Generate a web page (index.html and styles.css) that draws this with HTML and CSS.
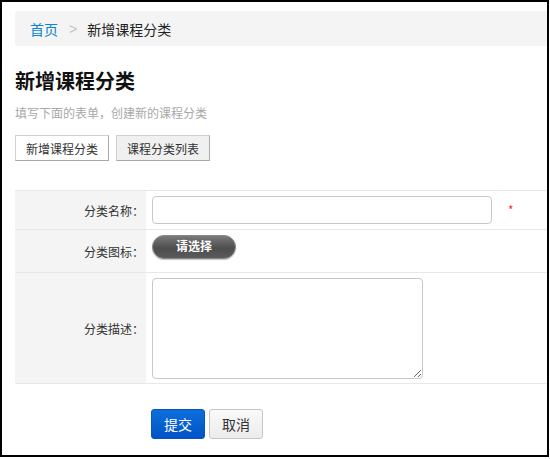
FILE: index.html
```html
<!DOCTYPE html>
<html lang="zh-CN">
<head>
<meta charset="utf-8">
<title>新增课程分类</title>
<link rel="stylesheet" href="styles.css">
</head>
<body>
<div class="frame">
  <div class="crumbs">
    <a class="crumb-link" href="#">首页</a>
    <span class="crumb-sep">&gt;</span>
    <span class="crumb-current">新增课程分类</span>
  </div>

  <h1 class="page-title">新增课程分类</h1>
  <p class="page-desc">填写下面的表单，创建新的课程分类</p>

  <div class="tabs">
    <button class="tab tab-active" type="button">新增课程分类</button>
    <button class="tab" type="button">课程分类列表</button>
  </div>

  <form class="cat-form">
    <table class="form-table">
      <tr class="row-name">
        <th>分类名称：</th>
        <td><input class="text-input" type="text"><span class="required">*</span></td>
      </tr>
      <tr class="row-icon">
        <th>分类图标：</th>
        <td><button class="pick-btn" type="button">请选择</button></td>
      </tr>
      <tr class="row-desc">
        <th>分类描述：</th>
        <td><textarea class="text-area"></textarea></td>
      </tr>
    </table>
    <div class="actions">
      <button class="btn btn-primary" type="submit">提交</button>
      <button class="btn btn-default" type="button">取消</button>
    </div>
  </form>
</div>
</body>
</html>
```

FILE: styles.css
```css
* {
  box-sizing: border-box;
}

html, body {
  margin: 0;
  padding: 0;
  background: #fff;
}

body {
  font-family: "Noto Sans CJK SC", "Liberation Sans", sans-serif;
  font-size: 12px;
  color: #333;
}

.frame {
  width: 549px;
  height: 457px;
  border: 2px solid #000;
  padding: 9px 0 0 13px;
}

/* breadcrumb bar */
.crumbs {
  height: 35px;
  background: #f4f4f4;
  border-radius: 3px 0 0 3px;
  display: flex;
  align-items: center;
  padding-left: 15px;
  font-size: 14px;
}

.crumb-link {
  color: #0a84d6;
  text-decoration: none;
}

.crumb-sep {
  color: #c4c4c4;
  margin: 0 10px 0 11px;
  font-family: "Liberation Sans", sans-serif;
}

.crumb-current {
  color: #222;
}

.page-title {
  margin: 23px 0 0;
  font-size: 20px;
  line-height: 24px;
  font-weight: bold;
  color: #111;
}

.page-desc {
  margin: 12px 0 0;
  font-size: 12px;
  line-height: 16px;
  color: #a8a8a8;
}

/* tab buttons */
.tabs {
  display: flex;
  gap: 7px;
  margin-top: 14px;
}

.tab {
  height: 26px;
  padding: 0 10px;
  font-family: inherit;
  font-size: 12px;
  color: #333;
  background: #f0f0f0;
  border: 1px solid #d0d0d0;
  border-right-color: #aaa;
  border-bottom-color: #aaa;
  border-radius: 0;
}

.tab-active {
  background: #fff;
}

/* form table */
.cat-form {
  margin-top: 29px;
}

.form-table {
  width: 532px;
  border-collapse: collapse;
}

.form-table th,
.form-table td {
  border-top: 1px solid #e8e8e8;
  border-bottom: 1px solid #e8e8e8;
  padding: 0;
}

.form-table th {
  width: 131px;
  background: #f4f4f4;
  font-weight: normal;
  text-align: right;
  padding-right: 2px;
  vertical-align: middle;
  color: #333;
}

.form-table td {
  padding-left: 6px;
  vertical-align: top;
}

.row-name td {
  height: 39px;
  padding-top: 5px;
}

.row-icon td {
  height: 43px;
  padding-top: 5px;
}

.row-desc td {
  height: 111px;
  padding-top: 5px;
}

.text-input {
  width: 340px;
  height: 28px;
  border: 1px solid #c8c8c8;
  border-radius: 4px;
  vertical-align: top;
  padding: 0 6px;
}

.required {
  display: inline-block;
  margin-left: 16px;
  margin-top: 5px;
  color: #f33;
  font-size: 12px;
  vertical-align: top;
}

.pick-btn {
  width: 84px;
  height: 24px;
  border: 1px solid #888;
  border-radius: 12px;
  background: linear-gradient(#7a7a7a, #4e4e4e 55%, #5a5a5a);
  color: #fff;
  font-family: inherit;
  font-size: 12px;
  font-weight: bold;
  line-height: 18px;
  padding: 0 0 3px;
  box-shadow: 0 1px 1px rgba(0, 0, 0, 0.25);
}

.text-area {
  display: block;
  width: 271px;
  height: 101px;
  border: 1px solid #c8c8c8;
  border-radius: 4px;
  resize: both;
  font-family: inherit;
}

/* bottom buttons */
.actions {
  display: flex;
  gap: 4px;
  margin-top: 25px;
  padding-left: 136px;
}

.btn {
  width: 54px;
  height: 30px;
  font-family: inherit;
  font-size: 14px;
  border-radius: 3px;
  padding: 0;
}

.btn-primary {
  color: #fff;
  background: linear-gradient(#0d6fdc, #0053c6);
  border: 1px solid #0a55b8;
}

.btn-default {
  color: #333;
  background: linear-gradient(#fafafa, #ececec);
  border: 1px solid #c6c6c6;
}
```
